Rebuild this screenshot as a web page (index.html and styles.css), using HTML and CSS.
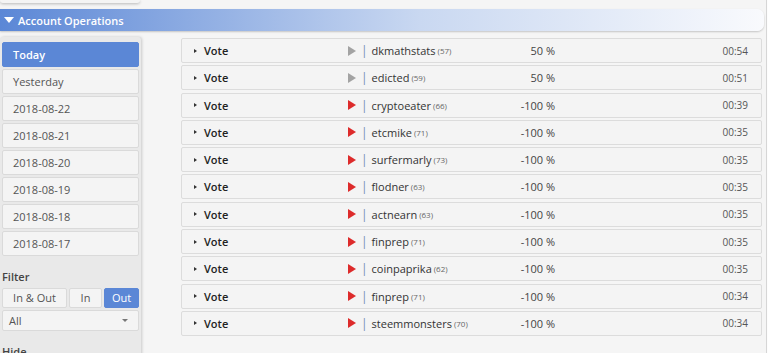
FILE: index.html
```html
<!DOCTYPE html>
<html lang="en">
<head>
    <meta charset="UTF-8">
    <title>Account Operations</title>
    <link rel="stylesheet" href="styles.css">
</head>
<body>
    <div class="page">
        <div class="top-card"></div>

        <div class="section-bar">
            <span class="bar-caret"></span>
            <span>Account Operations</span>
        </div>

        <div class="ops">
            <div class="sidebar">
                <div class="day active">Today</div>
                <div class="day">Yesterday</div>
                <div class="day">2018-08-22</div>
                <div class="day">2018-08-21</div>
                <div class="day">2018-08-20</div>
                <div class="day">2018-08-19</div>
                <div class="day">2018-08-18</div>
                <div class="day">2018-08-17</div>

                <div class="side-label">Filter</div>
                <div class="seg">
                    <div class="seg-btn wide">In &amp; Out</div>
                    <div class="seg-btn">In</div>
                    <div class="seg-btn on">Out</div>
                </div>
                <div class="select">
                    <span>All</span>
                    <span class="select-caret"></span>
                </div>

                <div class="side-label">Hide</div>
            </div>

            <div class="op-list">
                <div class="op">
                    <div class="op-type"><span class="caret"></span>Vote</div>
                    <div class="op-who"><span class="play grey"></span><span class="pipe">|</span>dkmathstats<span class="rep">(57)</span></div>
                    <div class="op-pct">50 %</div>
                    <div class="op-time">00:54</div>
                </div>
                <div class="op">
                    <div class="op-type"><span class="caret"></span>Vote</div>
                    <div class="op-who"><span class="play grey"></span><span class="pipe">|</span>edicted<span class="rep">(59)</span></div>
                    <div class="op-pct">50 %</div>
                    <div class="op-time">00:51</div>
                </div>
                <div class="op">
                    <div class="op-type"><span class="caret"></span>Vote</div>
                    <div class="op-who"><span class="play red"></span><span class="pipe">|</span>cryptoeater<span class="rep">(66)</span></div>
                    <div class="op-pct">-100 %</div>
                    <div class="op-time">00:39</div>
                </div>
                <div class="op">
                    <div class="op-type"><span class="caret"></span>Vote</div>
                    <div class="op-who"><span class="play red"></span><span class="pipe">|</span>etcmike<span class="rep">(71)</span></div>
                    <div class="op-pct">-100 %</div>
                    <div class="op-time">00:35</div>
                </div>
                <div class="op">
                    <div class="op-type"><span class="caret"></span>Vote</div>
                    <div class="op-who"><span class="play red"></span><span class="pipe">|</span>surfermarly<span class="rep">(73)</span></div>
                    <div class="op-pct">-100 %</div>
                    <div class="op-time">00:35</div>
                </div>
                <div class="op">
                    <div class="op-type"><span class="caret"></span>Vote</div>
                    <div class="op-who"><span class="play red"></span><span class="pipe">|</span>flodner<span class="rep">(63)</span></div>
                    <div class="op-pct">-100 %</div>
                    <div class="op-time">00:35</div>
                </div>
                <div class="op">
                    <div class="op-type"><span class="caret"></span>Vote</div>
                    <div class="op-who"><span class="play red"></span><span class="pipe">|</span>actnearn<span class="rep">(63)</span></div>
                    <div class="op-pct">-100 %</div>
                    <div class="op-time">00:35</div>
                </div>
                <div class="op">
                    <div class="op-type"><span class="caret"></span>Vote</div>
                    <div class="op-who"><span class="play red"></span><span class="pipe">|</span>finprep<span class="rep">(71)</span></div>
                    <div class="op-pct">-100 %</div>
                    <div class="op-time">00:35</div>
                </div>
                <div class="op">
                    <div class="op-type"><span class="caret"></span>Vote</div>
                    <div class="op-who"><span class="play red"></span><span class="pipe">|</span>coinpaprika<span class="rep">(62)</span></div>
                    <div class="op-pct">-100 %</div>
                    <div class="op-time">00:35</div>
                </div>
                <div class="op">
                    <div class="op-type"><span class="caret"></span>Vote</div>
                    <div class="op-who"><span class="play red"></span><span class="pipe">|</span>finprep<span class="rep">(71)</span></div>
                    <div class="op-pct">-100 %</div>
                    <div class="op-time">00:34</div>
                </div>
                <div class="op">
                    <div class="op-type"><span class="caret"></span>Vote</div>
                    <div class="op-who"><span class="play red"></span><span class="pipe">|</span>steemmonsters<span class="rep">(70)</span></div>
                    <div class="op-pct">-100 %</div>
                    <div class="op-time">00:34</div>
                </div>
            </div>
        </div>
    </div>
</body>
</html>
```

FILE: styles.css
```css
/* Reset basic styles */
* {
    margin: 0;
    padding: 0;
    box-sizing: border-box;
}

body {
    font-family: 'Open Sans', 'Liberation Sans', sans-serif;
    font-size: 11px;
    color: #444;
    background: #fdfdfd;
    overflow: hidden;
}

.page {
    width: 767px;
    height: 353px;
    background: #f5f5f5;
    border-right: 1px solid #d6d6d6;
    overflow: hidden;
}

/* bottom edge of the card above */
.top-card {
    width: 140px;
    height: 3px;
    background: #f4f4f4;
    border-radius: 0 0 4px 4px;
    box-shadow: 0 1px 3px rgba(0, 0, 0, 0.25);
}

.section-bar {
    display: flex;
    align-items: center;
    gap: 4px;
    width: 764px;
    height: 22px;
    margin-top: 6px;
    padding-left: 4px;
    color: #fff;
    font-weight: 600;
    font-size: 11px;
    background: linear-gradient(to right, #5b87d6, #c9d8f1 55%, #f9fafd);
    border-radius: 0 7px 7px 0;
    box-shadow: 0 1px 2px rgba(0, 0, 0, 0.2);
}

.bar-caret {
    width: 0;
    height: 0;
    border-left: 5px solid transparent;
    border-right: 5px solid transparent;
    border-top: 6px solid #fff;
}

.ops {
    display: flex;
    align-items: flex-start;
}

/* left column */
.sidebar {
    width: 141px;
    height: 320px;
    margin-top: 6px;
    padding: 5px 2px 0 2px;
    background: #e9e9e9;
    border-radius: 3px;
    box-shadow: 1px 0 3px rgba(0, 0, 0, 0.18);
}

.day {
    height: 25px;
    margin-bottom: 2px;
    padding-left: 10px;
    line-height: 23px;
    color: #555;
    background: #f4f4f4;
    border: 1px solid #dadada;
    border-radius: 2px;
}

.day.active {
    color: #fff;
    font-weight: 600;
    background: #5b87d6;
    border-color: #5b87d6;
}

.side-label {
    margin-top: 11px;
    height: 20px;
    line-height: 20px;
    font-weight: 600;
    color: #444;
}

.seg {
    display: flex;
    gap: 2px;
    margin-top: 1px;
}

.seg-btn {
    flex: 0 0 33px;
    height: 20px;
    line-height: 18px;
    text-align: center;
    color: #555;
    background: #f4f4f4;
    border: 1px solid #dadada;
    border-radius: 2px;
}

.seg-btn.wide {
    flex: 0 0 65px;
}

.seg-btn.on {
    flex: 0 0 35px;
    color: #fff;
    background: #5b87d6;
    border-color: #5b87d6;
}

.select {
    display: flex;
    justify-content: space-between;
    align-items: center;
    height: 21px;
    margin-top: 2px;
    padding: 0 10px 0 6px;
    color: #555;
    background: #f4f4f4;
    border: 1px solid #dadada;
    border-radius: 2px;
}

.select-caret {
    width: 0;
    height: 0;
    border-left: 3px solid transparent;
    border-right: 3px solid transparent;
    border-top: 3px solid #777;
}

/* operations list */
.op-list {
    width: 581px;
    margin: 7px 0 0 40px;
    display: flex;
    flex-direction: column;
    gap: 2.3px;
}

.op {
    display: grid;
    grid-template-columns: 166px 132px 75px 1fr;
    align-items: center;
    height: 25px;
    color: #333;
    background: #f4f4f4;
    border: 1px solid #dcdcdc;
    border-radius: 2px;
}

.op-type {
    display: flex;
    align-items: center;
    padding-left: 12px;
    font-weight: 600;
    color: #222;
}

.caret {
    width: 0;
    height: 0;
    margin-right: 7px;
    border-top: 2.5px solid transparent;
    border-bottom: 2.5px solid transparent;
    border-left: 3px solid #333;
}

.op-who {
    display: flex;
    align-items: center;
}

.play {
    width: 0;
    height: 0;
    border-top: 5px solid transparent;
    border-bottom: 5px solid transparent;
    border-left: 8px solid #a3a3a3;
}

.play.red {
    border-left-color: #dd2b2b;
}

.pipe {
    margin: 0 4px 0 5px;
    color: #6f8fb5;
    font-size: 12px;
}

.rep {
    margin-left: 2px;
    font-size: 8px;
    color: #666;
}

.op-pct {
    text-align: right;
    color: #444;
}

.op-time {
    text-align: right;
    padding-right: 13px;
    font-size: 10px;
    color: #555;
}
```
